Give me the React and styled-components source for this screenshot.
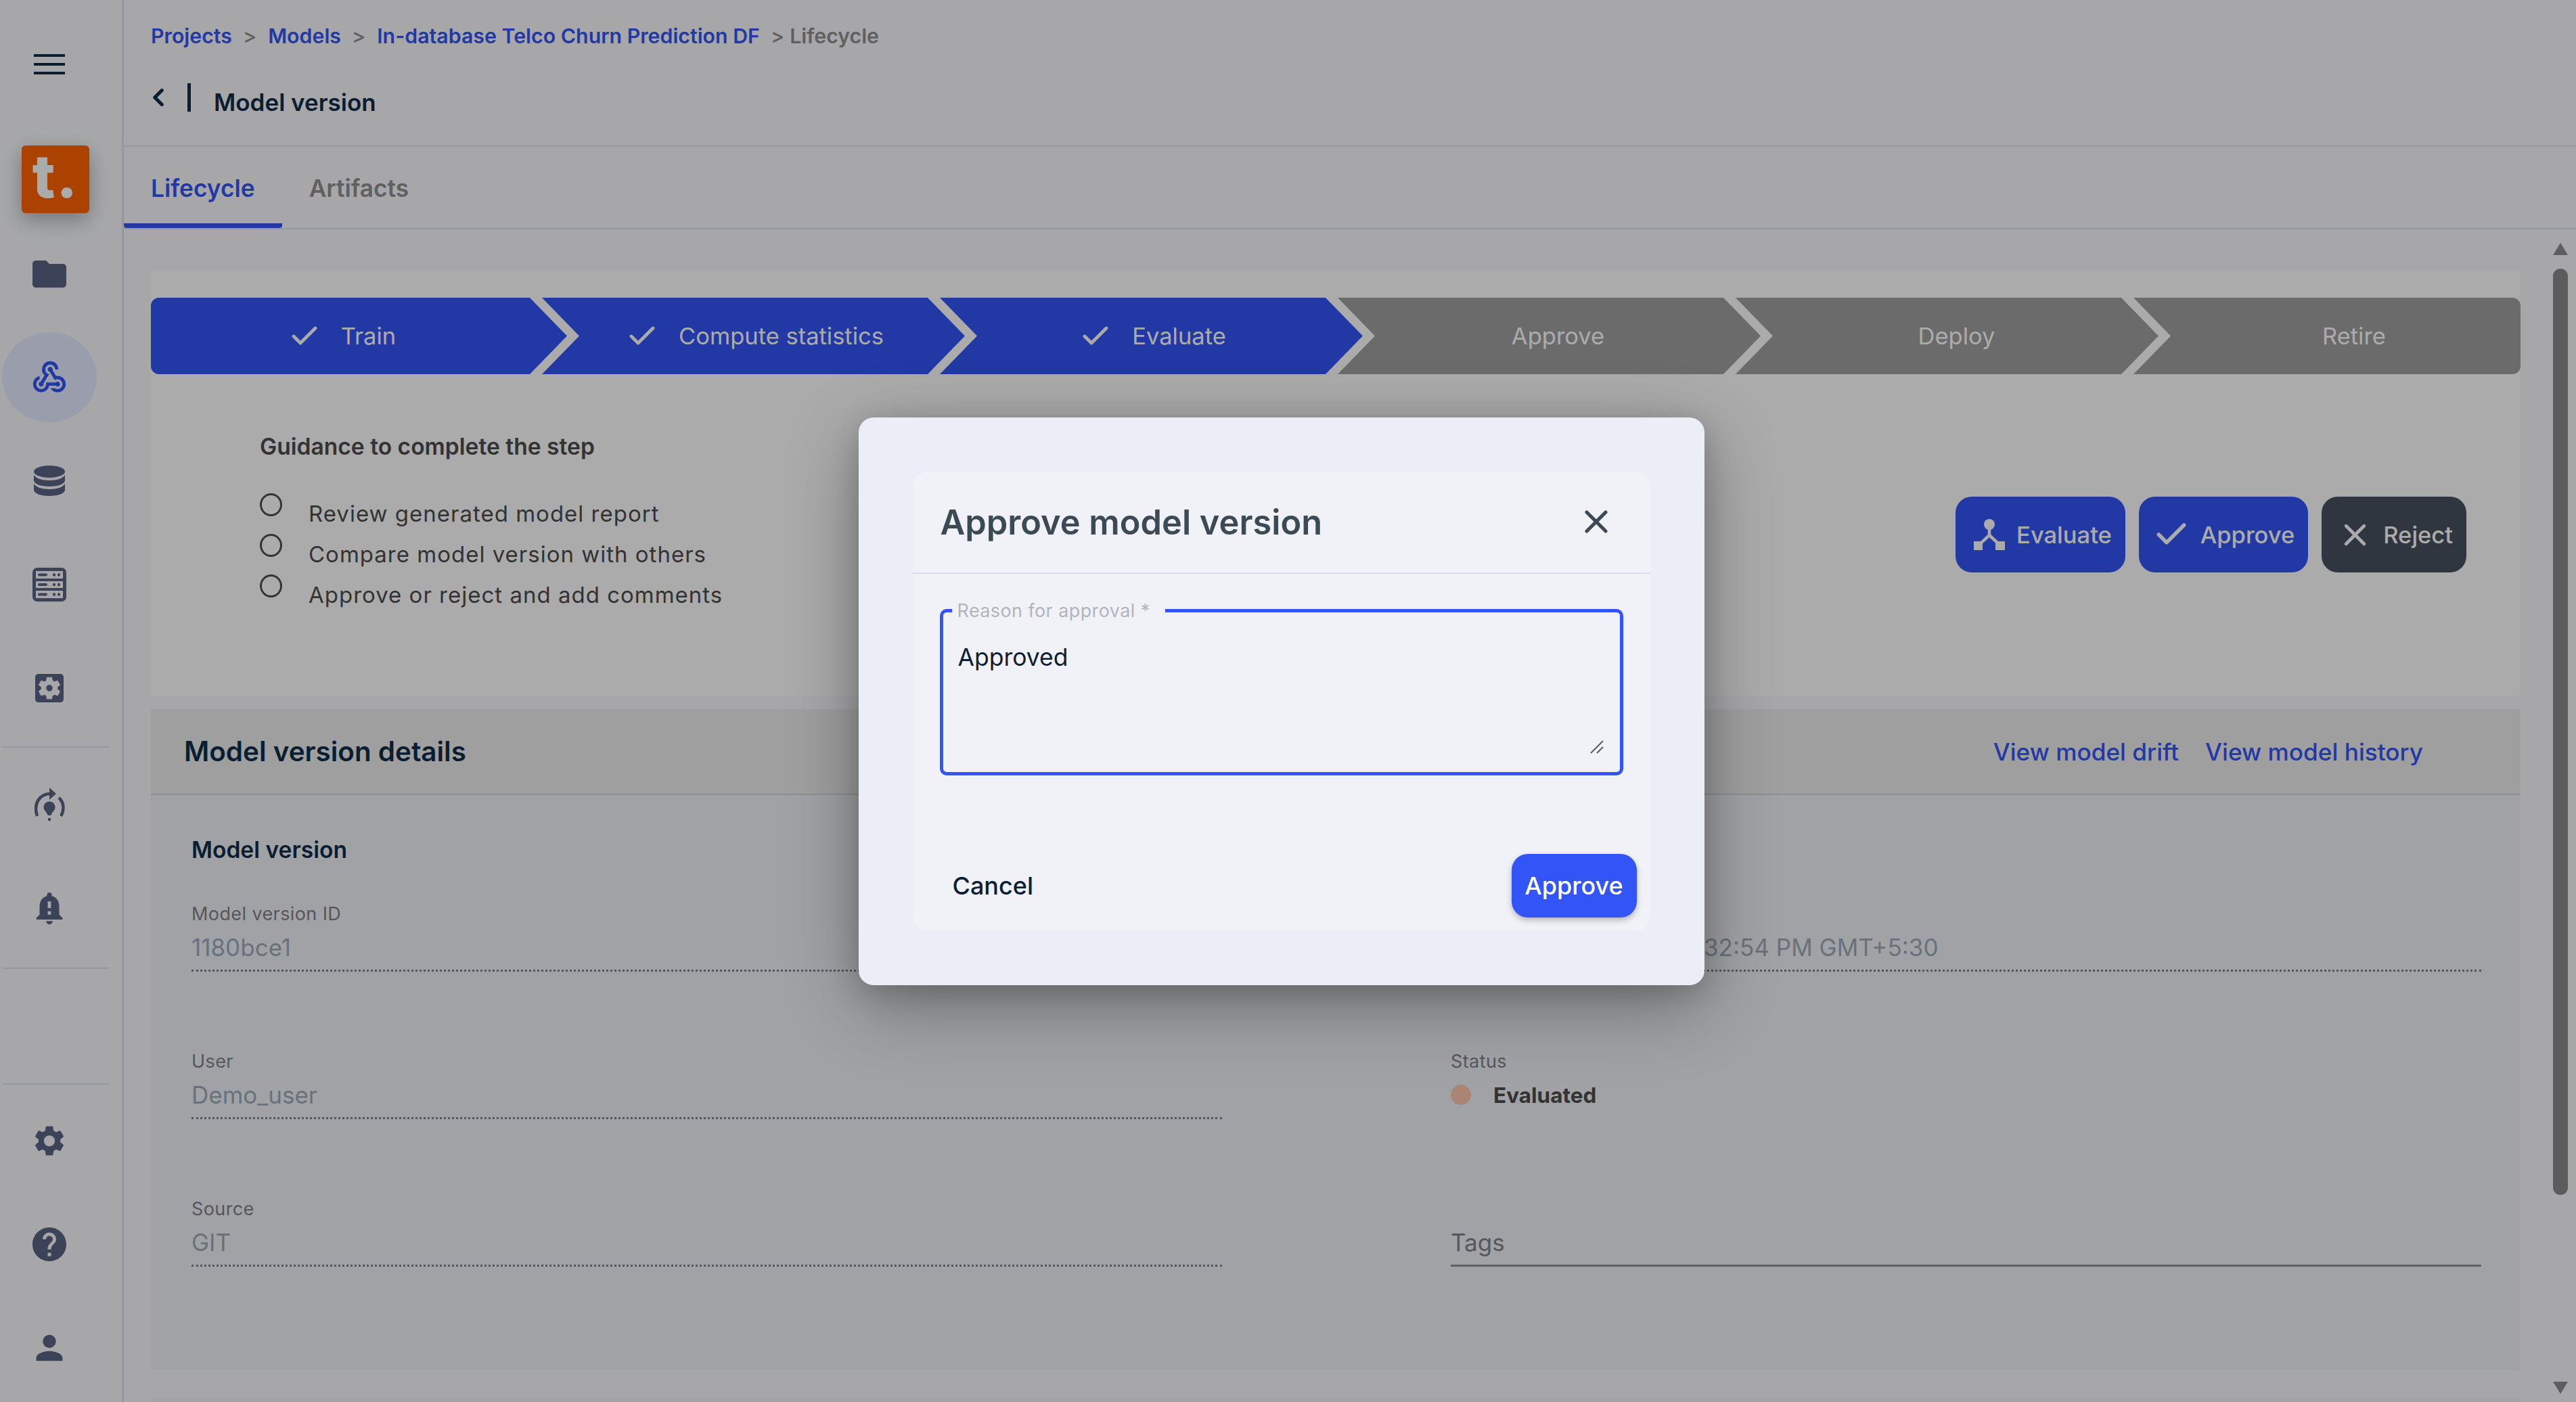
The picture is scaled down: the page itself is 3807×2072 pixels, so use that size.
import React from 'react';
import styled, { createGlobalStyle } from 'styled-components';
import {
  MdFolder, MdWebhook, MdSettingsApplications, MdNotificationImportant,
  MdSettings, MdHelp, MdPerson,
} from 'react-icons/md';
import { Check, ChevronLeft, X } from 'lucide-react';

const GlobalStyle = createGlobalStyle`
  html, body { margin: 0; padding: 0; height: 100%; overflow: hidden; }
  body { font-family: "Inter", "Noto Sans", sans-serif; background: #f9fafe; }
  * { box-sizing: border-box; }
`;

const Page = styled.div`
  position: relative;
  display: flex;
  width: 100vw;
  height: 100vh;
  overflow: hidden;
`;

/* sidebar */
const Sidebar = styled.aside`
  flex: 0 0 183px;
  display: flex;
  flex-direction: column;
  border-right: 3px solid #dfe3f2;
`;

const Burger = styled.div`
  height: 190px;
  padding: 80px 0 0 50px;
  display: flex;
  flex-direction: column;
  gap: 9px;
  span {
    display: block;
    width: 46px;
    height: 4px;
    background: #0f2d4a;
  }
`;

const Logo = styled.div`
  width: 100px;
  height: 100px;
  margin: 25px 0 13px 32px;
  background: #ff6300;
  border-radius: 6px;
  box-shadow: 0 10px 30px rgba(0, 0, 0, 0.3);
  color: #fff;
  font: 800 88px/90px "Inter", sans-serif;
  letter-spacing: 2px;
  text-align: center;
`;

const NavItem = styled.div`
  width: 140px;
  height: 153px;
  margin-left: 3px;
  display: flex;
  align-items: center;
  justify-content: center;
  color: ${p => (p.$active ? '#3355f7' : '#5a6382')};
  position: relative;
  &::before {
    content: ${p => (p.$active ? '""' : 'none')};
    position: absolute;
    left: 0;
    top: 10px;
    width: 140px;
    height: 133px;
    border-radius: 50%;
    background: #e6eaff;
  }
  svg { position: relative; }
`;

const SideRule = styled.div`
  width: 158px;
  height: 2px;
  margin: ${p => p.$margin};
  background: #dfe3f2;
  flex: none;
`;

/* header */
const Main = styled.main`
  flex: 1;
  min-width: 0;
  display: flex;
  flex-direction: column;
`;

const Header = styled.header`
  height: 217px;
  padding: 35px 0 0 40px;
  border-bottom: 2px solid #dfe3f2;
`;

const Crumbs = styled.nav`
  display: flex;
  align-items: center;
  height: 36px;
  font-size: 30.3px;
  font-weight: 600;
  color: #3355f7;
  span { color: #8f8f8f; margin: 0 17px 0 16px; font-weight: 500; }
  em { margin-left: -9px; font-style: normal; color: #8f8f8f; font-weight: 600; }
`;

const TitleRow = styled.div`
  display: flex;
  align-items: center;
  margin-top: 44px;
  color: #0f2d4a;
  h1 {
    margin: 14px 0 0 0;
    font-size: 35px;
    line-height: 44px;
    font-weight: 600;
  }
`;

const BackButton = styled.div`
  width: 64px;
  height: 40px;
  margin-left: -10px;
  display: flex;
  align-items: center;
`;

const TitleBar = styled.div`
  width: 5px;
  height: 42px;
  margin: 0 34px 0 0;
  background: #0f2d4a;
`;

const Tabs = styled.div`
  height: 122px;
  display: flex;
  border-bottom: 2px solid #dfe3f2;
`;

const Tab = styled.div`
  height: 120px;
  padding: 10px 40px 0;
  display: flex;
  align-items: center;
  font-size: 35.3px;
  font-weight: 600;
  color: ${p => (p.$active ? '#3355f7' : '#8f8f8f')};
  border-bottom: ${p => (p.$active ? '7px solid #3355f7' : '7px solid transparent')};
  border-radius: 4px;
`;

/* content */
const ContentRow = styled.div`
  flex: 1;
  min-height: 0;
  display: flex;
`;

const Content = styled.div`
  flex: 1;
  min-width: 0;
  padding: 61px 0 0 40px;
`;

const TopPanel = styled.section`
  height: 628px;
  padding-top: 40px;
  background: #fff;
`;

const Stepper = styled.div`
  display: grid;
  grid-template-columns: 615px 588px 588px 588px 588px 1fr;
`;

const Step = styled.div`
  height: 113px;
  margin-left: ${p => (p.$first ? 0 : '-37px')};
  padding: 0 ${p => Math.max(-p.$shift, 0)}px 0 ${p => Math.max(p.$shift, 0)}px;
  display: flex;
  align-items: center;
  justify-content: center;
  gap: 30px;
  color: #fff;
  font-size: 34.5px;
  background: ${p => (p.$done ? '#3355f7' : '#a0a0a0')};
  border-radius: ${p => (p.$first ? '12px 0 0 12px' : p.$last ? '0 12px 12px 0' : 0)};
  clip-path: ${p => (p.$first
    ? 'polygon(0 0, calc(100% - 55px) 0, 100% 50%, calc(100% - 55px) 100%, 0 100%)'
    : p.$last
      ? 'polygon(0 0, 100% 0, 100% 100%, 0 100%, 55px 50%)'
      : 'polygon(0 0, calc(100% - 55px) 0, 100% 50%, calc(100% - 55px) 100%, 0 100%, 55px 50%)')};
`;

const StepBody = styled.div`
  display: flex;
  justify-content: space-between;
  align-items: flex-start;
`;

const Guidance = styled.div`
  margin: 85px 0 0 161px;
  color: #4c4c4c;
  h3 {
    margin: 0 0 47px;
    font-size: 33.6px;
    line-height: 44px;
    font-weight: 600;
  }
`;

const Hint = styled.div`
  height: 60px;
  display: flex;
  gap: 39px;
  font-size: 33px;
  letter-spacing: 1px;
  line-height: 60px;
  &::before {
    content: "";
    width: 27px;
    height: 28px;
    border: 3px solid #4c4c4c;
    border-radius: 50%;
    flex: none;
  }
`;

const Actions = styled.div`
  display: flex;
  gap: 20px;
  margin: 181px 80px 0 0;
`;

const ActionButton = styled.button`
  height: 112px;
  padding: 0 20px 0 ${p => p.$pad}px;
  display: flex;
  align-items: center;
  gap: ${p => p.$gap}px;
  border: 0;
  border-radius: 24px;
  color: #fff;
  background: ${p => (p.$dark ? '#465160' : '#3355f7')};
  font: 500 34.5px "Inter", sans-serif;
`;

const DetailsHeader = styled.div`
  height: 127px;
  margin-top: 20px;
  padding: 0 144px 0 49px;
  display: flex;
  align-items: center;
  justify-content: space-between;
  background: #eeeeee;
  border-bottom: 2px solid #d5d5db;
  h2 {
    margin: 0;
    font-size: 40.4px;
    font-weight: 600;
    color: #0f2d4a;
  }
`;

const Links = styled.div`
  display: flex;
  gap: 39px;
  font-size: 35.2px;
  font-weight: 500;
  color: #3355f7;
`;

const DetailsBody = styled.section`
  height: 850px;
  padding: 59px 59px 0 60px;
  background: #f0f2f6;
  h4 {
    margin: 0 0 55px;
    font-size: 33.6px;
    line-height: 44px;
    font-weight: 600;
    color: #0f2d4a;
  }
`;

const FieldGrid = styled.div`
  display: grid;
  grid-template-columns: 1523px 1523px;
  column-gap: 338px;
  row-gap: 115px;
`;

const Field = styled.div`
  height: 103px;
  border-bottom: 3px ${p => (p.$solid ? 'solid #8f9197' : 'dotted #7d8086')};
`;

const FieldLabel = styled.div`
  height: 36px;
  font-size: 27px;
  line-height: 36px;
  color: #7f8289;
  letter-spacing: 0.4px;
`;

const FieldValue = styled.div`
  height: 44px;
  margin-top: 9px;
  padding-left: ${p => p.$indent || 0}px;
  font-size: 35px;
  line-height: 44px;
  color: ${p => (p.$dim ? '#7f8289' : '#9baab9')};
`;

const StatusValue = styled.div`
  display: flex;
  align-items: center;
  gap: 33px;
  height: 44px;
  margin-top: 9px;
  font-size: 31.5px;
  font-weight: 700;
  color: #4c4c4c;
  &::before {
    content: "";
    width: 30px;
    height: 30px;
    border-radius: 50%;
    background: #ffc6ac;
  }
`;

const NextPanel = styled.div`
  height: 60px;
  margin-top: 41px;
  background: #f0f2f6;
`;

/* scrollbar */
const Scrollbar = styled.div`
  flex: 0 0 82px;
  padding: 20px 0 0 33px;
  display: flex;
  flex-direction: column;
  align-items: center;
  width: 82px;
`;

const ScrollArrow = styled.div`
  width: 0;
  height: 0;
  margin-left: 2px;
  border-left: 11px solid transparent;
  border-right: 11px solid transparent;
  border-${p => (p.$down ? 'top' : 'bottom')}: 18px solid #8b8b8b;
  margin-top: ${p => (p.$down ? '276px' : 0)};
`;

const ScrollThumb = styled.div`
  width: 22px;
  height: 1369px;
  margin: 20px 0 0 2px;
  border-radius: 11px;
  background: #8a8a8a;
`;

/* dialog */
const Overlay = styled.div`
  position: absolute;
  inset: 0;
  padding: 0 20px 0 0;
  display: flex;
  align-items: center;
  justify-content: center;
  background: rgba(0, 0, 0, 0.33);
`;

const Dialog = styled.div`
  width: 1250px;
  height: 839px;
  padding: 80px;
  background: #ebeef7;
  border-radius: 22px;
  box-shadow: 0 30px 110px rgba(0, 0, 0, 0.32), 0 10px 40px rgba(0, 0, 0, 0.16);
`;

const DialogCard = styled.div`
  height: 679px;
  display: flex;
  flex-direction: column;
  background: #f0f2f8;
  border-radius: 22px;
`;

const DialogHead = styled.div`
  height: 151px;
  flex: none;
  padding: 0 40px 0 41px;
  display: flex;
  align-items: center;
  justify-content: space-between;
  border-bottom: 2px solid #d7dbec;
  color: #3c4a54;
  h2 {
    margin: 0;
    font-size: 50.5px;
    font-weight: 600;
  }
  button {
    width: 80px;
    height: 80px;
    padding: 0;
    border: 0;
    background: none;
    color: inherit;
    display: flex;
    align-items: center;
    justify-content: center;
  }
`;

const ReasonField = styled.fieldset`
  height: 257px;
  margin: 41px 40px 0 40px;
  padding: 0 0 0 13px;
  min-width: 0;
  border: 5px solid #3355f7;
  border-radius: 10px;
  legend {
    padding: 0 22px 0 8px;
    height: 28px;
    font-size: 27px;
    line-height: 28px;
    letter-spacing: 0.4px;
    color: #b0b5bb;
  }
`;

const ReasonText = styled.div`
  position: relative;
  height: 218px;
  padding: 33px 0 0 9px;
  font-size: 35.5px;
  line-height: 44px;
  color: #0b2036;
`;

const ResizeHandle = styled.svg`
  position: absolute;
  right: 23px;
  bottom: 20px;
`;

const DialogFoot = styled.div`
  display: flex;
  align-items: center;
  justify-content: space-between;
  margin-top: 116px;
  padding: 0 20px 0 59px;
  font-size: 36px;
  font-weight: 500;
  color: #0b2036;
`;

const PrimaryButton = styled.button`
  width: 185px;
  height: 94px;
  border: 0;
  border-radius: 24px;
  background: #3355f7;
  color: #fff;
  font: 500 36px "Inter", sans-serif;
  box-shadow: 0 4px 8px rgba(0, 0, 0, 0.25);
`;

/* hand-drawn icons */
const DatabaseIcon = () => (
  <svg width="46" height="46" viewBox="0 0 46 46" fill="currentColor">
    <ellipse cx="23" cy="9" rx="23" ry="9" />
    <path d="M0 14v8c0 5 10 9 23 9s23-4 23-9v-8c-3 5-12 8-23 8S3 19 0 14z" />
    <path d="M0 27v9c0 5 10 9 23 9s23-4 23-9v-9c-3 5-12 8-23 8S3 32 0 27z" />
  </svg>
);

const ServerIcon = () => (
  <svg width="50" height="50" viewBox="0 0 50 50" fill="currentColor">
    <path fillRule="evenodd" d="M7 0h36a7 7 0 0 1 7 7v36a7 7 0 0 1-7 7H7a7 7 0 0 1-7-7V7a7 7 0 0 1 7-7zM5 5v11h40V5zM5 20v10h40V20zM5 34v11h40V34z" />
    <rect x="8" y="8.5" width="14" height="4" rx="2" />
    <rect x="8" y="23" width="14" height="4" rx="2" />
    <rect x="8" y="37.5" width="14" height="4" rx="2" />
    <circle cx="32" cy="10.5" r="2.2" /><circle cx="39" cy="10.5" r="2.2" />
    <circle cx="32" cy="25" r="2.2" /><circle cx="39" cy="25" r="2.2" />
    <circle cx="32" cy="39.5" r="2.2" /><circle cx="39" cy="39.5" r="2.2" />
  </svg>
);

const LifecycleIcon = () => (
  <svg width="46" height="50" viewBox="0 0 46 50" fill="currentColor">
    <path d="M5 42C-1 24 8 9 25 9" fill="none" stroke="currentColor" strokeWidth="4.5" />
    <path d="M37 15c8 7 8 19 3 27" fill="none" stroke="currentColor" strokeWidth="4.5" />
    <path d="M23 0l10 9-10 9z" />
    <path d="M23 20.5c5 0 8.5 4 8.5 8.5 0 5-5 7-6 12h-5c-1-5-6-7-6-12 0-4.5 3.5-8.5 8.5-8.5z" />
    <rect x="21" y="45" width="4" height="4" />
  </svg>
);

const HubIcon = () => (
  <svg width="46" height="46" viewBox="0 0 46 46" fill="currentColor">
    <circle cx="23" cy="8" r="8" />
    <rect x="0" y="33" width="13" height="13" />
    <rect x="32" y="33" width="14" height="13" />
    <path d="M23 14v10L8 38M23 24l15 14" fill="none" stroke="currentColor" strokeWidth="4.5" />
  </svg>
);

const steps = [
  { name: 'Train', done: true, shift: -50 },
  { name: 'Compute statistics', done: true, shift: 4 },
  { name: 'Evaluate', done: true, shift: 4 },
  { name: 'Approve', shift: 26 },
  { name: 'Deploy', shift: 28 },
  { name: 'Retire', shift: 80 },
];

const hints = ['Review generated model report', 'Compare model version with others', 'Approve or reject and add comments'];

export default function App() {
  return (
    <Page>
      <GlobalStyle />
      <Sidebar>
        <Burger><span /><span /><span /></Burger>
        <Logo>t.</Logo>
        <NavItem><MdFolder size={60} /></NavItem>
        <NavItem $active><MdWebhook size={58} /></NavItem>
        <NavItem><DatabaseIcon /></NavItem>
        <NavItem><ServerIcon /></NavItem>
        <NavItem><MdSettingsApplications size={56} /></NavItem>
        <SideRule $margin="10px 0 7px 3px" />
        <NavItem><LifecycleIcon /></NavItem>
        <NavItem><MdNotificationImportant size={58} /></NavItem>
        <SideRule $margin="12px 0 169px 3px" />
        <SideRule $margin="0 0 6px 3px" />
        <NavItem><MdSettings size={54} /></NavItem>
        <NavItem><MdHelp size={60} /></NavItem>
        <NavItem><MdPerson size={58} /></NavItem>
      </Sidebar>

      <Main>
        <Header>
          <Crumbs>
            Projects<span>&gt;</span>Models<span>&gt;</span>In-database Telco Churn Prediction DF<span>&gt;</span><em>Lifecycle</em>
          </Crumbs>
          <TitleRow>
            <BackButton><ChevronLeft size={42} strokeWidth={3} /></BackButton>
            <TitleBar />
            <h1>Model version</h1>
          </TitleRow>
        </Header>
        <Tabs>
          <Tab $active>Lifecycle</Tab>
          <Tab>Artifacts</Tab>
        </Tabs>
        <ContentRow>
          <Content>
            <TopPanel>
              <Stepper>
                {steps.map((s, i) => (
                  <Step key={s.name} $done={s.done} $first={i === 0} $last={i === steps.length - 1} $shift={s.shift}>
                    {s.done && <Check size={48} strokeWidth={2.4} />}
                    {s.name}
                  </Step>
                ))}
              </Stepper>
              <StepBody>
                <Guidance>
                  <h3>Guidance to complete the step</h3>
                  {hints.map(h => <Hint key={h}>{h}</Hint>)}
                </Guidance>
                <Actions>
                  <ActionButton $pad={27} $gap={17}><HubIcon />Evaluate</ActionButton>
                  <ActionButton $pad={20} $gap={15}><Check size={56} strokeWidth={2.4} />Approve</ActionButton>
                  <ActionButton $dark $pad={23} $gap={15}><X size={53} strokeWidth={2.2} />Reject</ActionButton>
                </Actions>
              </StepBody>
            </TopPanel>
            <DetailsHeader>
              <h2>Model version details</h2>
              <Links><span>View model drift</span><span>View model history</span></Links>
            </DetailsHeader>
            <DetailsBody>
              <h4>Model version</h4>
              <FieldGrid>
                <Field>
                  <FieldLabel>Model version ID</FieldLabel>
                  <FieldValue>1180bce1</FieldValue>
                </Field>
                <Field>
                  <FieldLabel />
                  <FieldValue $indent={374}>32:54 PM GMT+5:30</FieldValue>
                </Field>
                <Field>
                  <FieldLabel>User</FieldLabel>
                  <FieldValue>Demo_user</FieldValue>
                </Field>
                <div>
                  <FieldLabel>Status</FieldLabel>
                  <StatusValue>Evaluated</StatusValue>
                </div>
                <Field>
                  <FieldLabel>Source</FieldLabel>
                  <FieldValue>GIT</FieldValue>
                </Field>
                <Field $solid>
                  <FieldLabel />
                  <FieldValue $dim>Tags</FieldValue>
                </Field>
              </FieldGrid>
            </DetailsBody>
            <NextPanel />
          </Content>
          <Scrollbar>
            <ScrollArrow />
            <ScrollThumb />
            <ScrollArrow $down />
          </Scrollbar>
        </ContentRow>
      </Main>

      <Overlay>
        <Dialog>
          <DialogCard>
            <DialogHead>
              <h2>Approve model version</h2>
              <button><X size={56} strokeWidth={2.2} /></button>
            </DialogHead>
            <ReasonField>
              <legend>Reason for approval *</legend>
              <ReasonText>
                Approved
                <ResizeHandle width="22" height="22" viewBox="0 0 22 22" stroke="#5b5b5b" strokeWidth="2">
                  <path d="M2 20L20 2M11 20L20 11" />
                </ResizeHandle>
              </ReasonText>
            </ReasonField>
            <DialogFoot>
              <span>Cancel</span>
              <PrimaryButton>Approve</PrimaryButton>
            </DialogFoot>
          </DialogCard>
        </Dialog>
      </Overlay>
    </Page>
  );
}
